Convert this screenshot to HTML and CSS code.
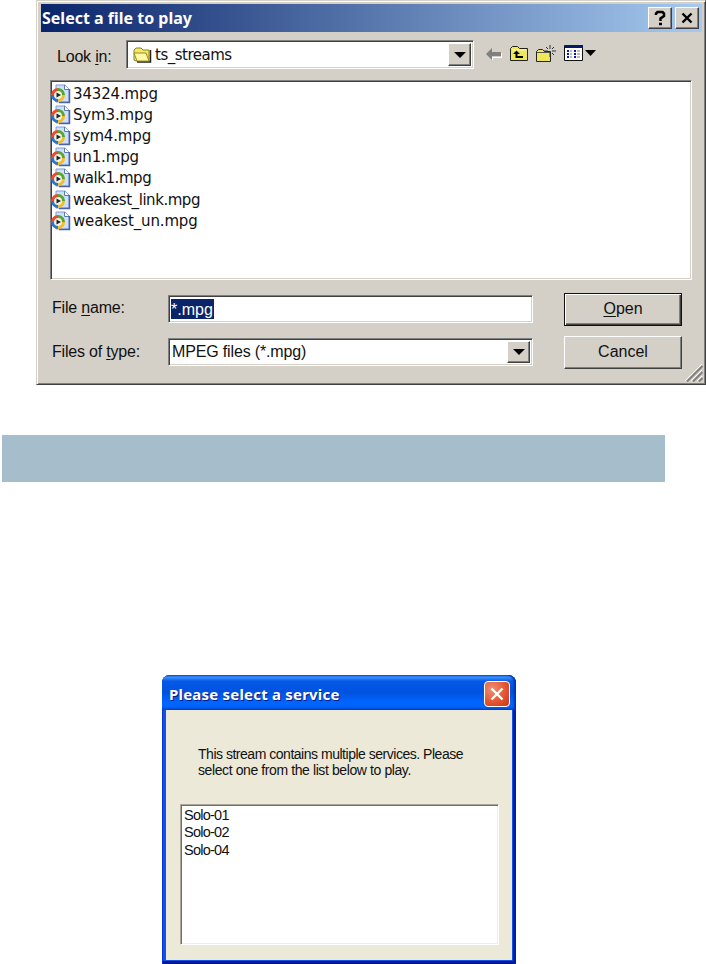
FILE: index.html
```html
<!DOCTYPE html>
<html>
<head>
  <title>Select a file to play</title>
  <meta charset="utf-8">
  <link rel="stylesheet" href="styles.css">
</head>
<body>
  <svg width="0" height="0" class="defs">
    <symbol id="mpg" viewBox="0 0 20 20">
      <path d="M5 1h9l4 4v13H5z" fill="#cfe0fb" stroke="#7d9bdc"/>
      <path d="M13.500 1v4.500H18" fill="#fff" stroke="#5f79b5"/>
      <path d="M18.500 5v13.500H8" fill="none" stroke="#4a64a0" stroke-width="1.500"/>
      <circle cx="7" cy="11" r="5" fill="#eef3e4"/>
      <path d="M1.500 11A5.500 5.500 0 0 1 7 5.500" fill="none" stroke="#ee4a2c" stroke-width="3"/>
      <path d="M7 5.500a5.500 5.500 0 0 1 5.500 5.500" fill="none" stroke="#5aa52e" stroke-width="3"/>
      <path d="M12.500 11A5.500 5.500 0 0 1 7 16.500" fill="none" stroke="#f2bd2a" stroke-width="3"/>
      <path d="M7 16.500A5.500 5.500 0 0 1 1.500 11" fill="none" stroke="#2e74cc" stroke-width="3"/>
      <path d="M5.500 8.500l4.500 2.500-4.500 2.500z" fill="#222"/>
    </symbol>
  </svg>

  <div class="file-dialog">
    <div class="title-bar">
      <span class="title">Select a file to play</span>
      <button class="title-button help"><svg width="14" height="16"><path d="M3 5V3.500L4.500 2h5L11 3.500V6L7.500 8.500V11M6 14h3" fill="none" stroke="#000" stroke-width="2.500"/></svg></button>
      <button class="title-button"><svg width="12" height="12"><path d="M1.500 1.500l9 9M10.500 1.500l-9 9" stroke="#000" stroke-width="2.400"/></svg></button>
    </div>

    <div class="look-row">
      <label>Look <u>i</u>n:</label>
      <div class="field combo look-in">
        <svg class="folder" width="19" height="16">
          <path d="M1 13V3l2-2h5l2 2h6v11H3z" fill="#f2e869" stroke="#8c821e"/>
          <path d="M17.500 3v12H4" fill="none" stroke="#222" stroke-width="1.500"/>
          <path d="M1 6h12l3 8H4z" fill="#fffba5" stroke="#978b24"/>
        </svg>
        <span>ts_streams</span>
        <button class="drop"><svg width="12" height="6"><path d="M0 0h12L6 6z"/></svg></button>
      </div>
      <div class="tools">
        <svg width="16" height="14"><path d="M6.500 13v-2.500h9V6" fill="none" stroke="#fff"/><path d="M0 7l6-6v4h9v4H6v4z" fill="#808080"/></svg>
        <svg width="18" height="16"><path d="M.500 14.500V2.500l2-2h5l2 2h8v12z" fill="#eee75a" stroke="#222"/><path d="M2 4h14" stroke="#fffbb0"/><path d="M3 8l3.500-3.500L10 8zM5.500 7h2v3H13v2H5.500z" fill="#000"/></svg>
        <svg width="20" height="18"><path d="M.500 16.500v-10l2-2h4l2 2h6v10z" fill="#eee75a" stroke="#222"/><path d="M1 7.500h13" stroke="#555"/><path d="M14 0v4M14 8v4M8 6h4M16 6h4M10 2l2 2M16 8l2 2M18 2l-2 2" stroke="#333"/></svg>
        <svg width="32" height="17"><path d="M.500.500h18v15H.500z" fill="#fff" stroke="#111"/><path d="M1 0h18v3H1z" fill="#061b68"/><path d="M3 6h2M3 9h2M3 12h2M10 6h2M10 9h2M10 12h2" stroke="#1018a0" stroke-width="2"/><path d="M6 6h2M6 9h2M6 12h2M13 6h3M13 9h3M13 12h3" stroke="#777"/><path d="M21 5h11l-5.500 6z"/></svg>
      </div>
    </div>

    <ul class="field files">
      <li><svg><use href="#mpg"/></svg><span>34324.mpg</span></li>
      <li><svg><use href="#mpg"/></svg><span>Sym3.mpg</span></li>
      <li><svg><use href="#mpg"/></svg><span>sym4.mpg</span></li>
      <li><svg><use href="#mpg"/></svg><span>un1.mpg</span></li>
      <li><svg><use href="#mpg"/></svg><span class="tight">walk1.mpg</span></li>
      <li><svg><use href="#mpg"/></svg><span class="tight">weakest_link.mpg</span></li>
      <li><svg><use href="#mpg"/></svg><span>weakest_un.mpg</span></li>
    </ul>

    <div class="form">
      <div class="form-row">
        <label>File <u>n</u>ame:</label>
        <div class="field name"><span class="selected">*.mpg</span></div>
        <button class="push default"><u>O</u>pen</button>
      </div>
      <div class="form-row">
        <label class="type-label">Files of <u>t</u>ype:</label>
        <div class="field combo type">
          <span>MPEG files (*.mpg)</span>
          <button class="drop"><svg width="12" height="6"><path d="M0 0h12L6 6z"/></svg></button>
        </div>
        <button class="push">Cancel</button>
      </div>
    </div>
    <svg class="grip" width="18" height="18"><path d="M0 17L17 0M6 17L17 6M12 17l5-5" stroke="#fff"/><path d="M2 17.500L17.500 2M8 17.500L17.500 8M14 17.500l3.500-3.500" stroke="#808080" stroke-width="2"/></svg>
  </div>

  <div class="band"></div>

  <div class="service-dialog">
    <div class="xp-bar">
      <span>Please select a service</span>
      <button class="xp-close"><svg width="14" height="14"><path d="M1.500 1.500l11 11M12.500 1.500l-11 11" stroke="#fff" stroke-width="2.400"/></svg></button>
    </div>
    <div class="xp-body">
      <p><span class="line-one">This stream contains multiple services. Please</span><br><span class="line-two">select one from the list below to play.</span></p>
      <ul class="services">
        <li>Solo-01</li>
        <li>Solo-02</li>
        <li>Solo-04</li>
      </ul>
    </div>
  </div>
</body>
</html>
```
FILE: styles.css
```css
* {
  box-sizing: border-box;
}

body {
  margin: 0;
  height: 964px;
  overflow: hidden;
  background: #fff;
  color: #111;
  font-family: "Liberation Sans", Arial, sans-serif;
  font-size: 16px;
}

.defs {
  position: absolute;
}

ul {
  list-style: none;
  margin: 0;
  padding: 0;
}

button {
  padding: 0;
  font: inherit;
  color: inherit;
}

u {
  text-underline-offset: 2px;
  text-decoration-thickness: 1px;
}

.file-dialog {
  position: relative;
  width: 670px;
  height: 385px;
  margin-left: 36px;
  padding: 3px 3px 0 4px;
  background: #d4d0c8;
  border: 1px solid;
  border-color: #d4d0c8 #404040 #404040 #d4d0c8;
  box-shadow: inset 1px 1px #fff, inset -1px -1px #808080;
}

.title-bar {
  display: flex;
  align-items: center;
  height: 28px;
  padding: 0 3px 0 1px;
  background: linear-gradient(90deg, #0a246a, #a6caf0);
}

.title {
  flex: 1;
  color: #fff;
  font-family: "Noto Sans", sans-serif;
  font-weight: bold;
  font-size: 16px;
}

.title-button,
.drop {
  display: flex;
  align-items: center;
  justify-content: center;
  background: #d4d0c8;
  border: 1px solid;
  border-color: #fff #404040 #404040 #fff;
  box-shadow: inset -1px -1px #808080;
}

.title-button {
  width: 24px;
  height: 22px;
}

.help {
  margin-right: 3px;
}

.look-row {
  display: flex;
  align-items: center;
  height: 48px;
  padding: 0 0 3px 16px;
}

.look-row label {
  width: 69px;
  padding-top: 4px;
}

.look-row label,
.form-row label {
  letter-spacing: -0.2px;
}

.field {
  background: #fff;
  border: 1px solid;
  border-color: #808080 #fff #fff #808080;
  box-shadow: inset 1px 1px #404040, inset -1px -1px #d4d0c8;
}

.combo {
  display: flex;
  align-items: center;
  padding: 2px;
}

.combo span {
  flex: 1;
}

.look-in {
  width: 348px;
  height: 29px;
  padding-left: 6px;
  font-family: "DejaVu Sans", sans-serif;
  font-size: 15px;
  letter-spacing: -0.5px;
}

.folder {
  margin-right: 3px;
}

.drop {
  width: 23px;
  height: 100%;
}

.tools {
  display: flex;
  align-items: center;
  gap: 8px;
  margin-left: 12px;
  margin-top: -2px;
}

.files {
  width: 642px;
  height: 200px;
  margin-left: 9px;
  padding: 2px 0;
  font-family: "DejaVu Sans", sans-serif;
  font-size: 15px;
  letter-spacing: -0.15px;
}

.files li {
  display: flex;
  align-items: center;
  height: 21.200px;
}

.files svg {
  width: 20px;
  height: 20px;
  margin-right: 2px;
}

.tight {
  letter-spacing: -0.450px;
}

.form {
  padding: 13px 0 0 11px;
}

.form-row {
  display: flex;
  align-items: center;
  height: 32px;
  margin-bottom: 11px;
}

.form-row label {
  width: 116px;
  padding-bottom: 3px;
}

.form-row .type-label {
  padding-bottom: 0;
}

.name,
.type {
  width: 365px;
  height: 28px;
  margin-right: 31px;
}

.name {
  padding: 3px 2px;
}

.type {
  padding-left: 3px;
  letter-spacing: -0.15px;
}

.selected {
  display: block;
  width: 43px;
  height: 20px;
  line-height: 21px;
  overflow: hidden;
  background: #0a246a;
  color: #fff;
}

.push {
  width: 118px;
  height: 33px;
  background: #d4d0c8;
  border: 1px solid;
  border-color: #fff #404040 #404040 #fff;
  box-shadow: inset -1px -1px #808080;
}

.default {
  border-color: #111;
  box-shadow: inset 1px 1px #fff, inset -1px -1px #404040, inset -2px -2px #808080;
}

.grip {
  position: absolute;
  right: 2px;
  bottom: 2px;
}

.band {
  width: 663px;
  height: 47px;
  margin: 50px 0 193px 2px;
  background: #a6bdcb;
}

.service-dialog {
  width: 354px;
  height: 289px;
  margin-left: 162px;
  padding: 0 4px 4px;
  background: #0f52e8;
  border-radius: 8px 8px 0 0;
  box-shadow: inset 1px 0 #0831d9, inset -3px 0 #001da0, inset 0 -3px #001590;
}

.xp-bar {
  display: flex;
  align-items: center;
  justify-content: space-between;
  height: 35px;
  margin: 0 -4px;
  padding: 3px 6px 0 7px;
  border-radius: 8px 8px 0 0;
  background: linear-gradient(#0855dd 0, #3c91ff 6%, #2a81f6 10%, #0358e5 18%, #0052df 50%, #0066ff 78%, #0064fa 90%, #0046c9 100%);
  box-shadow: inset -2px 0 2px #0031b0;
  color: #fff;
  font-family: "Noto Sans", sans-serif;
  font-weight: bold;
  font-size: 15px;
  letter-spacing: 0.2px;
  text-shadow: 1px 1px #0a1883;
}

.xp-close {
  display: flex;
  align-items: center;
  justify-content: center;
  width: 26px;
  height: 26px;
  border: 1px solid #fff;
  border-radius: 4px;
  background: radial-gradient(circle at 30% 30%, #ee9172, #e2512e 60%, #c63a14);
}

.xp-body {
  height: 250px;
  padding: 36px 13px 0 14px;
  background: #ece9d8;
}

.xp-body p {
  height: 58px;
  margin: 0;
  padding-left: 18px;
  font-size: 14px;
  line-height: 16px;
  white-space: nowrap;
}

.line-one {
  letter-spacing: -0.480px;
}

.line-two {
  letter-spacing: -0.4px;
}

.services {
  height: 141px;
  padding: 2px 3px;
  background: #fff;
  border: 1px solid;
  border-color: #aca899 #fff #fff #aca899;
  box-shadow: inset 1px 1px #716f64, inset -1px -1px #f1efe2;
  font-size: 14.500px;
  letter-spacing: -0.750px;
}

.services li {
  height: 17.300px;
  line-height: 17.300px;
}
```
